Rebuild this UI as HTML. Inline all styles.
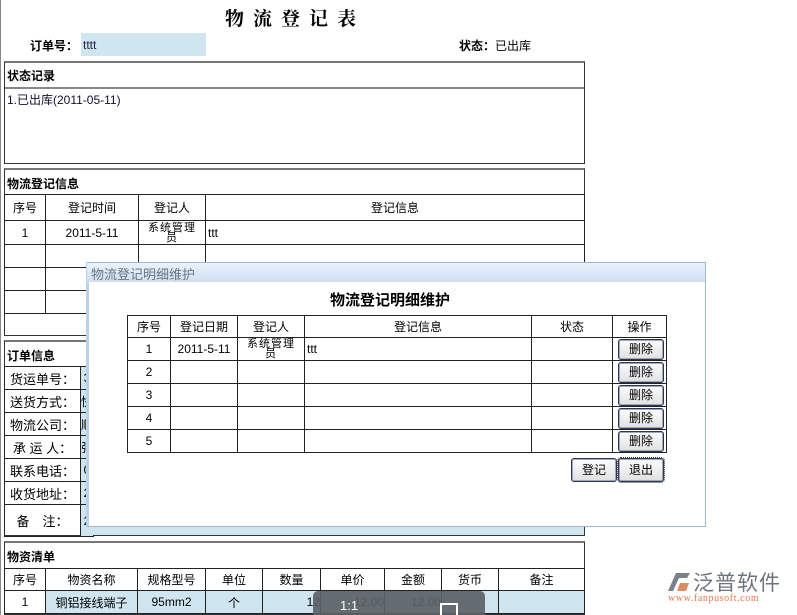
<!DOCTYPE html>
<html><head><meta charset="utf-8"><style>
*{margin:0;padding:0;box-sizing:border-box}
body{width:797px;height:615px;background:#fff;position:relative;overflow:hidden;font-family:"Liberation Sans","Noto Sans CJK SC",sans-serif;font-size:12px;color:#000}
.a{position:absolute}
.box{position:absolute;border:1px solid #333;border-top:2px solid #777;border-left:1px solid #333}
table{border-collapse:collapse;position:absolute;table-layout:fixed}
td{border:1px solid #222;text-align:center;font-size:12px;padding:0;overflow:hidden;white-space:nowrap}
.b{font-weight:bold}
.lb{background:#cfe5ef}
.w{width:50px;margin:0 auto;white-space:normal;font-size:11px;line-height:10px;letter-spacing:1px}
.btn{position:absolute;width:46px;height:21px;border:1px solid #335;border-radius:3px;background:linear-gradient(#fdfdfd,#e0e0e0);font-size:12px;text-align:center;line-height:19px;box-shadow:inset 0 0 0 1px #9ab}
</style></head><body>
<div class="a" style="left:0;top:0;width:1px;height:615px;background:#888"></div>
<div class="a b" style="left:225px;top:4px;font-size:19px;letter-spacing:9px;font-family:'Noto Serif CJK SC',serif">物流登记表</div>
<div class="a b" style="left:30px;top:37px">订单号：</div>
<div class="a lb" style="left:81px;top:33px;width:125px;height:23px;padding:5px 2px;color:#224">tttt</div>
<div class="a" style="left:459px;top:37px"><b>状态：</b>已出库</div>

<div class="box" style="left:4px;top:61px;width:581px;height:103px"></div>
<div class="a b" style="left:7px;top:67px">状态记录</div>
<div class="a" style="left:5px;top:87px;width:579px;height:2px;background:#888"></div>
<div class="a" style="left:7px;top:91px;color:#113">1.已出库(2011-05-11)</div>

<div class="box" style="left:4px;top:168px;width:581px;height:168px"></div>
<div class="a b" style="left:7px;top:175px">物流登记信息</div>
<table style="left:4px;top:194px;width:581px">
<colgroup><col style="width:41px"><col style="width:93px"><col style="width:67px"><col></colgroup>
<tr style="height:26px"><td>序号</td><td>登记时间</td><td>登记人</td><td>登记信息</td></tr>
<tr style="height:24px"><td>1</td><td>2011-5-11</td><td><div class="w">系统管理员</div></td><td style="text-align:left;padding-left:2px">ttt</td></tr>
<tr style="height:23px"><td></td><td></td><td></td><td></td></tr>
<tr style="height:23px"><td></td><td></td><td></td><td></td></tr>
<tr style="height:23px"><td></td><td></td><td></td><td></td></tr>
</table>

<div class="box" style="left:4px;top:340px;width:581px;height:196px"></div>
<div class="a b" style="left:7px;top:347px">订单信息</div>
<table style="left:4px;top:366px;width:90px">
<colgroup><col style="width:76px"><col></colgroup>
<tr style="height:23px"><td style="font-size:13px">货运单号：</td><td class="lb">3</td></tr>
<tr style="height:23px"><td style="font-size:13px">送货方式：</td><td class="lb">快</td></tr>
<tr style="height:23px"><td style="font-size:13px">物流公司：</td><td class="lb">顺</td></tr>
<tr style="height:23px"><td style="font-size:13px">承 运 人：</td><td class="lb">张</td></tr>
<tr style="height:23px"><td style="font-size:13px">联系电话：</td><td class="lb">0</td></tr>
<tr style="height:23px"><td style="font-size:13px">收货地址：</td><td class="lb">2</td></tr>
<tr style="height:32px"><td style="font-size:13px">备　注：</td><td class="lb">2</td></tr>
</table>
<div class="a lb" style="left:88px;top:525px;width:496px;height:10px"></div>

<div class="box" style="left:4px;top:541px;width:581px;height:74px"></div>
<div class="a b" style="left:7px;top:548px">物资清单</div>
<table style="left:4px;top:568px;width:581px">
<colgroup><col style="width:41px"><col style="width:92px"><col style="width:68px"><col style="width:57px"><col style="width:58px"><col style="width:64px"><col style="width:57px"><col style="width:57px"><col></colgroup>
<tr style="height:22px"><td>序号</td><td>物资名称</td><td>规格型号</td><td>单位</td><td>数量</td><td>单价</td><td>金额</td><td>货币</td><td>备注</td></tr>
<tr style="height:23px"><td>1</td><td class="lb">铜铝接线端子</td><td class="lb">95mm2</td><td class="lb">个</td><td class="lb" style="text-align:right">12</td><td class="lb" style="text-align:right">12.00</td><td class="lb" style="text-align:right">12.00</td><td class="lb"></td><td class="lb"></td></tr>
</table>
<div class="a" style="left:313px;top:591px;width:172px;height:24px;background:#5c6266;border-radius:5px 5px 0 0;opacity:.92"></div>
<div class="a" style="left:340px;top:598px;color:#fff;font-size:13px">1:1</div>
<div class="a" style="left:440px;top:603px;width:18px;height:12px;border:2px solid #fff;border-bottom:none"></div>

<!-- dialog -->
<div class="a" style="left:86px;top:262px;width:620px;height:265px;border:1px solid #9bb8d6;border-left:3px solid #b9d2ea;background:#fff"></div>
<div class="a" style="left:87px;top:263px;width:618px;height:19px;background:linear-gradient(#eaf2fb,#cfdff0);color:#6a7580;font-size:13px;padding:1px 4px">物流登记明细维护</div>
<div class="a b" style="left:330px;top:289px;font-size:15px">物流登记明细维护</div>
<table style="left:127px;top:315px;width:540px">
<colgroup><col style="width:43px"><col style="width:67px"><col style="width:67px"><col style="width:227px"><col style="width:81px"><col></colgroup>
<tr style="height:22px"><td>序号</td><td>登记日期</td><td>登记人</td><td>登记信息</td><td>状态</td><td>操作</td></tr>
<tr style="height:23px"><td>1</td><td>2011-5-11</td><td><div class="w">系统管理员</div></td><td style="text-align:left;padding-left:2px">ttt</td><td></td><td></td></tr>
<tr style="height:23px"><td>2</td><td></td><td></td><td></td><td></td><td></td></tr>
<tr style="height:23px"><td>3</td><td></td><td></td><td></td><td></td><td></td></tr>
<tr style="height:23px"><td>4</td><td></td><td></td><td></td><td></td><td></td></tr>
<tr style="height:23px"><td>5</td><td></td><td></td><td></td><td></td><td></td></tr>
</table>
<div class="btn" style="left:618px;top:339px">删除</div>
<div class="btn" style="left:618px;top:362px">删除</div>
<div class="btn" style="left:618px;top:385px">删除</div>
<div class="btn" style="left:618px;top:408px">删除</div>
<div class="btn" style="left:618px;top:431px">删除</div>
<div class="btn" style="left:571px;top:458px;height:24px;line-height:22px">登记</div>
<div class="btn" style="left:618px;top:458px;height:24px;line-height:22px;outline:1px dotted #333">退出</div>

<!-- logo -->
<svg class="a" style="left:666px;top:569px" width="26" height="24" viewBox="0 0 26 24"><path d="M2 22 L10 4 L24 4 L21 9 L13 9 L7 22Z" fill="#7a8188"/><path d="M11 22 L14 14 L23 14 L20 22Z" fill="#e08a60"/></svg>
<div class="a" style="left:693px;top:567px;font-size:21px;color:#6d747a;letter-spacing:1px">泛普软件</div>
<div class="a" style="left:668px;top:593px;font-size:10px;color:#e07a50;font-family:'Liberation Serif',serif;letter-spacing:.6px">www.fanpusoft.com</div>
</body></html>
